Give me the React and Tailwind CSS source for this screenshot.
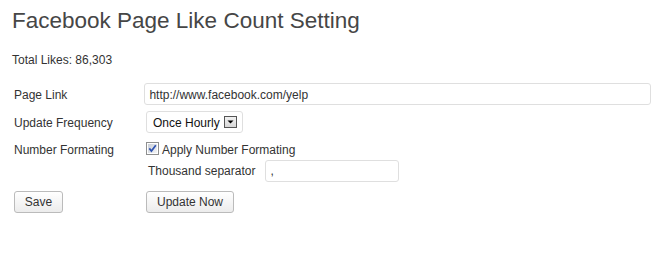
import React from "react";

function Checkbox() {
  return (
    <svg width="13" height="13" viewBox="0 0 13 13" className="shrink-0">
      <defs>
        <linearGradient id="cbg" x1="0" y1="0" x2="1" y2="1">
          <stop offset="0" stopColor="#c9ced6" />
          <stop offset="1" stopColor="#f4f5f7" />
        </linearGradient>
      </defs>
      <rect x="0.5" y="0.5" width="12" height="12" fill="#ffffff" stroke="#8e8f8f" />
      <rect x="2" y="2" width="9" height="9" fill="url(#cbg)" />
      <path d="M3.3 6.4 L5.4 9 L9.8 3.2" fill="none" stroke="#2f53b0" strokeWidth="1.7" strokeLinejoin="miter" />
    </svg>
  );
}

function ArrowBox() {
  return (
    <svg width="13" height="12" viewBox="0 0 13 12" className="shrink-0">
      <defs>
        <linearGradient id="abg" x1="0" y1="0" x2="0" y2="1">
          <stop offset="0" stopColor="#f3f3f3" />
          <stop offset="1" stopColor="#d6d6d6" />
        </linearGradient>
      </defs>
      <rect x="0.5" y="0.5" width="12" height="11" fill="url(#abg)" stroke="#555555" />
      <path d="M3.5 4.5 L9.5 4.5 L6.5 7.5 Z" fill="#000000" />
    </svg>
  );
}

export default function App() {
  return (
    <div className="w-[663px] h-[259px] bg-white px-[12px] font-['Liberation_Sans',Arial,sans-serif] text-[12px] text-[#333333]">
      <h2 className="pt-[8px] text-[22.5px] leading-[26px] font-normal text-[#464646]">
        Facebook Page Like Count Setting
      </h2>
      <p className="mt-[18px] leading-[16px]">Total Likes: 86,303</p>

      <div className="mt-[15px] ml-[2px] flex flex-col">
        <div className="flex items-center h-[22px]">
          <div className="w-[131px] leading-[16px] pt-[1px]">Page Link</div>
          <input
            readOnly
            value="http://www.facebook.com/yelp"
            className="w-[509px] h-[22px] border border-[#dfdfdf] rounded-[3px] px-[4px] pt-[1px] text-[12px] text-[#333333] outline-none font-['Liberation_Sans',Arial,sans-serif]"
          />
        </div>

        <div className="mt-[6px] flex items-center h-[22px]">
          <div className="w-[131px] leading-[16px] pt-[1px]">Update Frequency</div>
          <div className="ml-[1px] w-[97px] h-[22px] border border-[#dfdfdf] rounded-[3px] bg-white flex items-center pl-[6px] pr-[5px]">
            <span className="leading-[16px] pt-[1px] text-[#111111]">Once Hourly</span>
            <span className="ml-auto flex">
              <ArrowBox />
            </span>
          </div>
        </div>

        <div className="mt-[9px] flex items-start">
          <div className="w-[131px] leading-[13px] pt-[2px]">Number Formating</div>
          <label className="ml-[1px] flex items-start">
            <Checkbox />
            <span className="ml-[3px] leading-[13px] pt-[2px]">Apply Number Formating</span>
          </label>
        </div>

        <div className="mt-[3px] flex items-center h-[22px]">
          <div className="w-[131px]" />
          <span className="ml-[3px] leading-[16px]">Thousand separator</span>
          <input
            readOnly
            value=","
            className="ml-[10px] w-[134px] h-[22px] border border-[#dfdfdf] rounded-[3px] px-[4px] text-[12px] text-[#333333] outline-none font-['Liberation_Sans',Arial,sans-serif]"
          />
        </div>

        <div className="mt-[9px] flex items-center h-[22px]">
          <div className="w-[131px]">
            <button className="w-[49px] h-[22px] border border-[#bbbbbb] rounded-[3px] bg-linear-to-b from-white to-[#ececec] text-[12px] text-[#333333] leading-[16px]">
              Save
            </button>
          </div>
          <button className="ml-[1px] w-[88px] h-[22px] border border-[#bbbbbb] rounded-[3px] bg-linear-to-b from-white to-[#ececec] text-[12px] text-[#333333] leading-[16px]">
            Update Now
          </button>
        </div>
      </div>
    </div>
  );
}
